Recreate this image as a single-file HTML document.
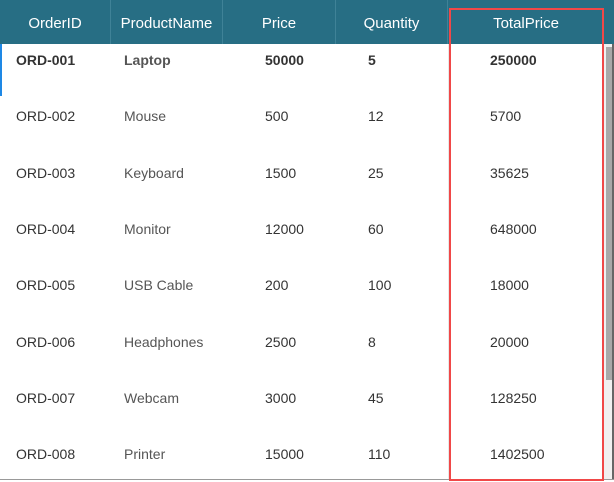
<!DOCTYPE html>
<html><head><meta charset="utf-8"><style>
*{margin:0;padding:0;box-sizing:border-box}
body{width:614px;height:482px;overflow:hidden;background:#fff;font-family:"Liberation Sans",sans-serif;position:relative}
.hdr{position:absolute;left:0;top:0;width:614px;height:44px;background:#276e84}
.hc{position:absolute;top:0;height:44px;line-height:48px;color:#fff;font-size:15px;text-align:center;border-right:1px solid #3f8297}
.cell{position:absolute;font-size:14px;color:#333}
.pn{color:#555}
</style></head><body>
<div class="hdr">
<div class="hc" style="left:0;width:111px">OrderID</div>
<div class="hc" style="left:111px;width:112px">ProductName</div>
<div class="hc" style="left:223px;width:113px">Price</div>
<div class="hc" style="left:336px;width:112px">Quantity</div>
<div class="hc" style="left:448px;width:156px;border:none">TotalPrice</div>
</div>
<div style="position:absolute;left:0;top:44px;width:2px;height:52px;background:#1e88e5"></div>
<div style="position:absolute;left:448px;top:44px;width:1px;height:436px;background:#e8e8e8"></div>
<div style="position:absolute;left:604px;top:44px;width:10px;height:436px;background:#f0f0f0"></div>
<div style="position:absolute;left:606px;top:47px;width:6px;height:333px;background:#a8a8a8"></div>
<div style="position:absolute;left:612px;top:44px;width:2px;height:436px;background:#666"></div>
<div style="position:absolute;left:0;top:479px;width:614px;height:1px;background:#999"></div>
<div style="position:absolute;left:449px;top:8px;width:155px;height:473px;border:2px solid #f04848"></div>
<div id="rows"></div>
<script>
var d=[["ORD-001","Laptop","50000","5","250000"],["ORD-002","Mouse","500","12","5700"],["ORD-003","Keyboard","1500","25","35625"],["ORD-004","Monitor","12000","60","648000"],["ORD-005","USB Cable","200","100","18000"],["ORD-006","Headphones","2500","8","20000"],["ORD-007","Webcam","3000","45","128250"],["ORD-008","Printer","15000","110","1402500"]];
var xs=[16,124,265,368,490],h="";
d.forEach(function(r,i){var y=52+i*56.3;r.forEach(function(t,j){h+='<div class="cell'+(j==1?' pn':'')+'" style="left:'+xs[j]+'px;top:'+y+'px;'+(i==0?'font-weight:bold;':'')+'">'+t+'</div>';});});
document.getElementById("rows").innerHTML=h;
</script>
</body></html>
